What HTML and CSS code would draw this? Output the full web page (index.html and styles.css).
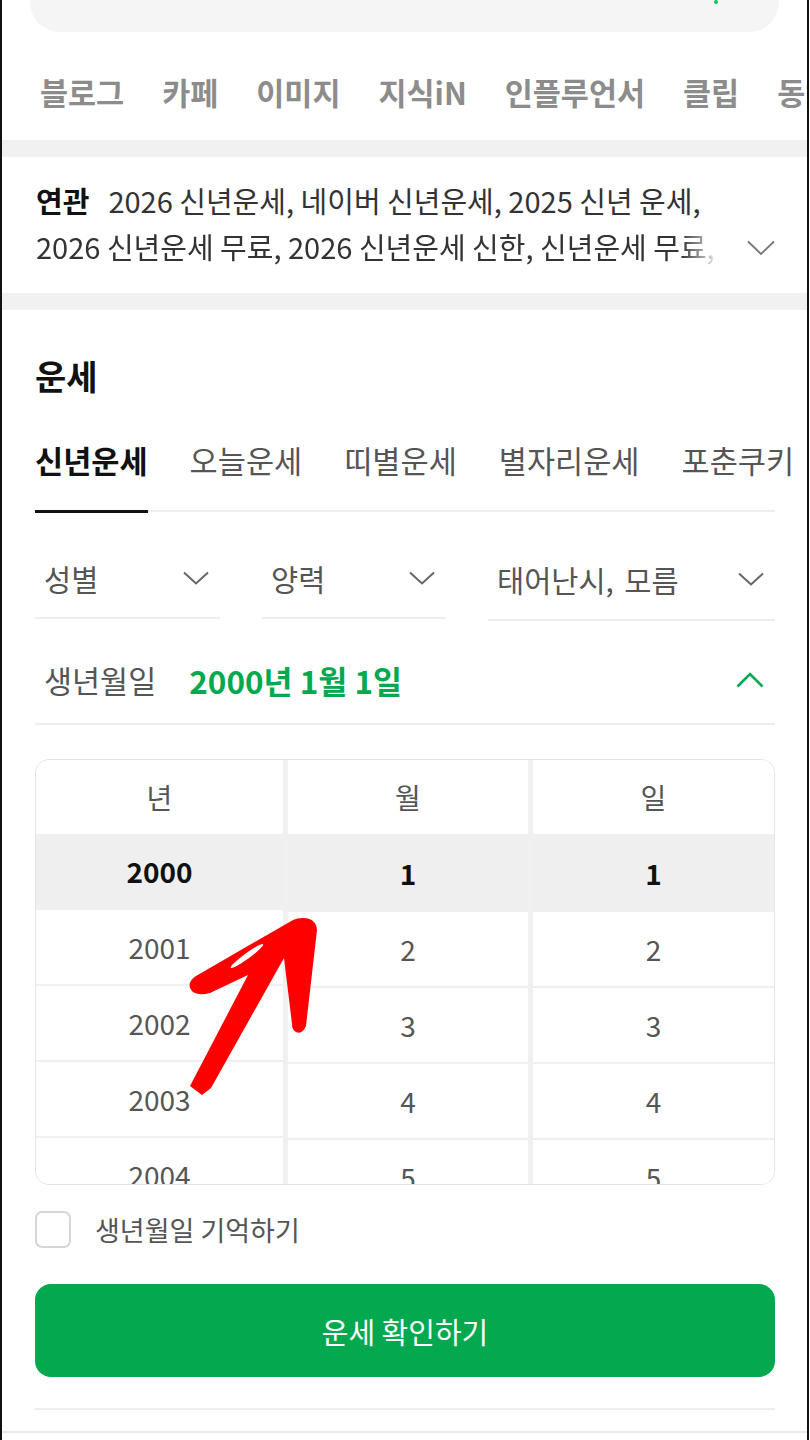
FILE: index.html
```html
<html>

<head>
    <title>운세 - 네이버 검색</title>
    <link rel="stylesheet" href="styles.css">
</head>

<body>
    <div class="screen">

        <div class="search"><span class="search-dot"></span></div>

        <nav class="verticals">
            <span>블로그</span>
            <span>카페</span>
            <span>이미지</span>
            <span>지식iN</span>
            <span>인플루언서</span>
            <span>클립</span>
            <span>동영상</span>
        </nav>

        <div class="band"></div>

        <div class="related">
            <div class="related-lines">
                <div class="related-line"><b class="related-label">연관</b>2026 신년운세, 네이버 신년운세, 2025 신년 운세,</div>
                <div class="related-line fade">2026 신년운세 무료, 2026 신년운세 신한, 신년운세 무료, 토정비결</div>
            </div>
            <svg class="related-more" width="28" height="16" viewBox="0 0 28 16">
                <path d="M1 1.5 L14 14 L27 1.5" fill="none" stroke="#777" stroke-width="1.8" />
            </svg>
        </div>

        <div class="band"></div>

        <section class="fortune">
            <h2 class="fortune-title">운세</h2>

            <div class="fortune-tabs">
                <span class="tab active">신년운세</span>
                <span class="tab">오늘운세</span>
                <span class="tab">띠별운세</span>
                <span class="tab">별자리운세</span>
                <span class="tab">포춘쿠키</span>
            </div>

            <div class="fortune-selects">
                <div class="select sel-gender">
                    <span>성별</span>
                    <svg width="26" height="14" viewBox="0 0 26 14"><path d="M1 1.5 L13 12.5 L25 1.5" fill="none" stroke="#666" stroke-width="2" /></svg>
                </div>
                <div class="select sel-calendar">
                    <span>양력</span>
                    <svg width="26" height="14" viewBox="0 0 26 14"><path d="M1 1.5 L13 12.5 L25 1.5" fill="none" stroke="#666" stroke-width="2" /></svg>
                </div>
                <div class="select sel-time">
                    <span>태어난시, 모름</span>
                    <svg width="26" height="14" viewBox="0 0 26 14"><path d="M1 1.5 L13 12.5 L25 1.5" fill="none" stroke="#666" stroke-width="2" /></svg>
                </div>
            </div>

            <div class="birth">
                <span class="birth-label">생년월일</span>
                <span class="birth-value">2000년 1월 1일</span>
                <svg class="birth-toggle" width="28" height="16" viewBox="0 0 28 16"><path d="M1.5 14.5 L14 2 L26.5 14.5" fill="none" stroke="#03a84f" stroke-width="2.6" /></svg>
            </div>

            <div class="picker">
                <div class="col col-year">
                    <div class="col-head">년</div>
                    <div class="cell selected">2000</div>
                    <div class="cell">2001</div>
                    <div class="cell">2002</div>
                    <div class="cell">2003</div>
                    <div class="cell">2004</div>
                </div>
                <div class="col">
                    <div class="col-head">월</div>
                    <div class="cell selected">1</div>
                    <div class="cell">2</div>
                    <div class="cell">3</div>
                    <div class="cell">4</div>
                    <div class="cell">5</div>
                </div>
                <div class="col">
                    <div class="col-head">일</div>
                    <div class="cell selected">1</div>
                    <div class="cell">2</div>
                    <div class="cell">3</div>
                    <div class="cell">4</div>
                    <div class="cell">5</div>
                </div>
            </div>

            <label class="remember">
                <span class="check"></span>
                <span>생년월일 기억하기</span>
            </label>

            <button class="submit">운세 확인하기</button>

            <div class="divider"></div>
        </section>

        <div class="bottom-line"></div>

        <!-- red hand-drawn arrow annotation -->
        <svg class="arrow" width="150" height="200" viewBox="0 0 150 200">
            <path d="M123 18 Q136 18 137 30 L126 126 Q122 135 116 132 Q112 130 112 124 L104 58 L31 188 L22 195 L10 186 L68 75 L30 93 Q14 97 10 88 Q8 81 16 76 L113 20 Q117 18 123 18 Z" fill="#ff0000" />
            <ellipse cx="67" cy="56" rx="20" ry="2.8" fill="#fff" transform="rotate(-36 67 56)" />
        </svg>
    </div>
</body>

</html>
```

FILE: styles.css
```css
body {
    margin: 0;
    background-color: #fff;
    font-family: "Noto Sans CJK KR", "Noto Sans", sans-serif;
}

.screen {
    position: relative;
    width: 805px;
    height: 1440px;
    border-left: 2px solid #111;
    border-right: 2px solid #111;
    overflow: hidden;
}

.search {
    height: 60px;
    margin: -28px 28px 0;
    padding-right: 61px;
    box-sizing: border-box;
    background-color: #f5f5f5;
    border-radius: 30px;
    display: flex;
    align-items: center;
    justify-content: flex-end;
}

.search-dot {
    width: 4px;
    height: 4px;
    border-radius: 2px;
    background-color: #03c75a;
}

.verticals {
    display: flex;
    gap: 38px;
    padding: 40px 0 28px 38px;
    font-size: 30.5px;
    line-height: 40px;
    font-weight: 700;
    color: #8c8c8c;
    white-space: nowrap;
}

.verticals span {
    flex-shrink: 0;
}

.band {
    height: 17px;
    background-color: #f1f1f1;
}

.related {
    display: flex;
    align-items: flex-end;
    padding: 20px 32px 24px 34px;
    font-size: 29px;
    line-height: 46px;
    color: #333;
}

.related-lines {
    flex: 1;
    min-width: 0;
}

.related-line {
    white-space: nowrap;
    overflow: hidden;
}

.related-line.fade {
    width: 684px;
    -webkit-mask-image: linear-gradient(to right, #000 645px, transparent);
    mask-image: linear-gradient(to right, #000 645px, transparent);
}

.related-label {
    font-weight: 700;
    color: #111;
    margin-right: 19px;
}

.related-more {
    margin-bottom: 13px;
    flex-shrink: 0;
}

.fortune {
    padding: 46px 32px 0 33px;
}

.fortune-title {
    margin: 0;
    font-size: 34px;
    line-height: 40px;
    font-weight: 700;
    color: #111;
}

.fortune-tabs {
    display: flex;
    gap: 42px;
    margin-top: 44px;
    border-bottom: 2px solid #eee;
    font-size: 30.6px;
    line-height: 40px;
    color: #555;
    white-space: nowrap;
}

.tab {
    position: relative;
    flex-shrink: 0;
    padding-bottom: 30px;
}

.tab.active {
    font-weight: 700;
    color: #111;
}

.tab.active::after {
    content: "";
    position: absolute;
    left: 0;
    right: 0;
    bottom: -3px;
    height: 3px;
    background-color: #111;
}

.fortune-selects {
    display: flex;
    gap: 42px;
    margin-top: 27px;
}

.select {
    height: 80px;
    padding: 0 11px 0 9px;
    border-bottom: 2px solid #eee;
    display: flex;
    align-items: center;
    justify-content: space-between;
    font-size: 29.5px;
    word-spacing: 4px;
    color: #555;
}

.sel-gender {
    flex: 0 0 185px;
    box-sizing: border-box;
}

.sel-calendar {
    flex: 0 0 184px;
    box-sizing: border-box;
}

.sel-time {
    flex: 1;
}

.birth {
    display: flex;
    align-items: center;
    padding: 39px 11px 23px 9px;
    border-bottom: 2px solid #eee;
    font-size: 30.5px;
    line-height: 40px;
}

.birth-label {
    color: #555;
}

.birth-value {
    margin-left: 33px;
    font-size: 31.5px;
    font-weight: 700;
    color: #03a84f;
}

.birth-toggle {
    margin-left: auto;
}

.picker {
    margin-top: 34px;
    height: 426px;
    box-sizing: border-box;
    border: 1px solid #e4e4e4;
    border-radius: 14px;
    overflow: hidden;
    background-color: #f0f0f0;
    display: grid;
    grid-template-columns: 247px 240px 1fr;
    gap: 5px;
    font-size: 28px;
    color: #555;
}

.col {
    display: flex;
    flex-direction: column;
    background-color: #fff;
}

.col-head,
.cell {
    flex-shrink: 0;
    height: 74px;
    display: flex;
    align-items: center;
    justify-content: center;
    border-bottom: 2px solid #f0f0f0;
}

.cell.selected {
    background-color: #efefef;
    border-bottom-color: #efefef;
    font-weight: 700;
    color: #111;
}

.col-year .cell {
    position: relative;
    top: -2px;
}

.remember {
    display: flex;
    align-items: center;
    gap: 24px;
    margin-top: 26px;
    font-size: 27px;
    line-height: 37px;
    color: #555;
}

.check {
    width: 36px;
    height: 37px;
    box-sizing: border-box;
    border: 2px solid #d6d6d6;
    border-radius: 7px;
}

.submit {
    display: block;
    width: 100%;
    height: 93px;
    margin-top: 36px;
    border: none;
    border-radius: 16px;
    background-color: #03a84f;
    color: #fff;
    font-family: inherit;
    font-size: 29px;
}

.divider {
    margin-top: 31px;
    height: 2px;
    background-color: #eee;
}

.bottom-line {
    margin-top: 21px;
    height: 2px;
    background-color: #e9e9e9;
}

.arrow {
    position: absolute;
    left: 178px;
    top: 900px;
}
```
